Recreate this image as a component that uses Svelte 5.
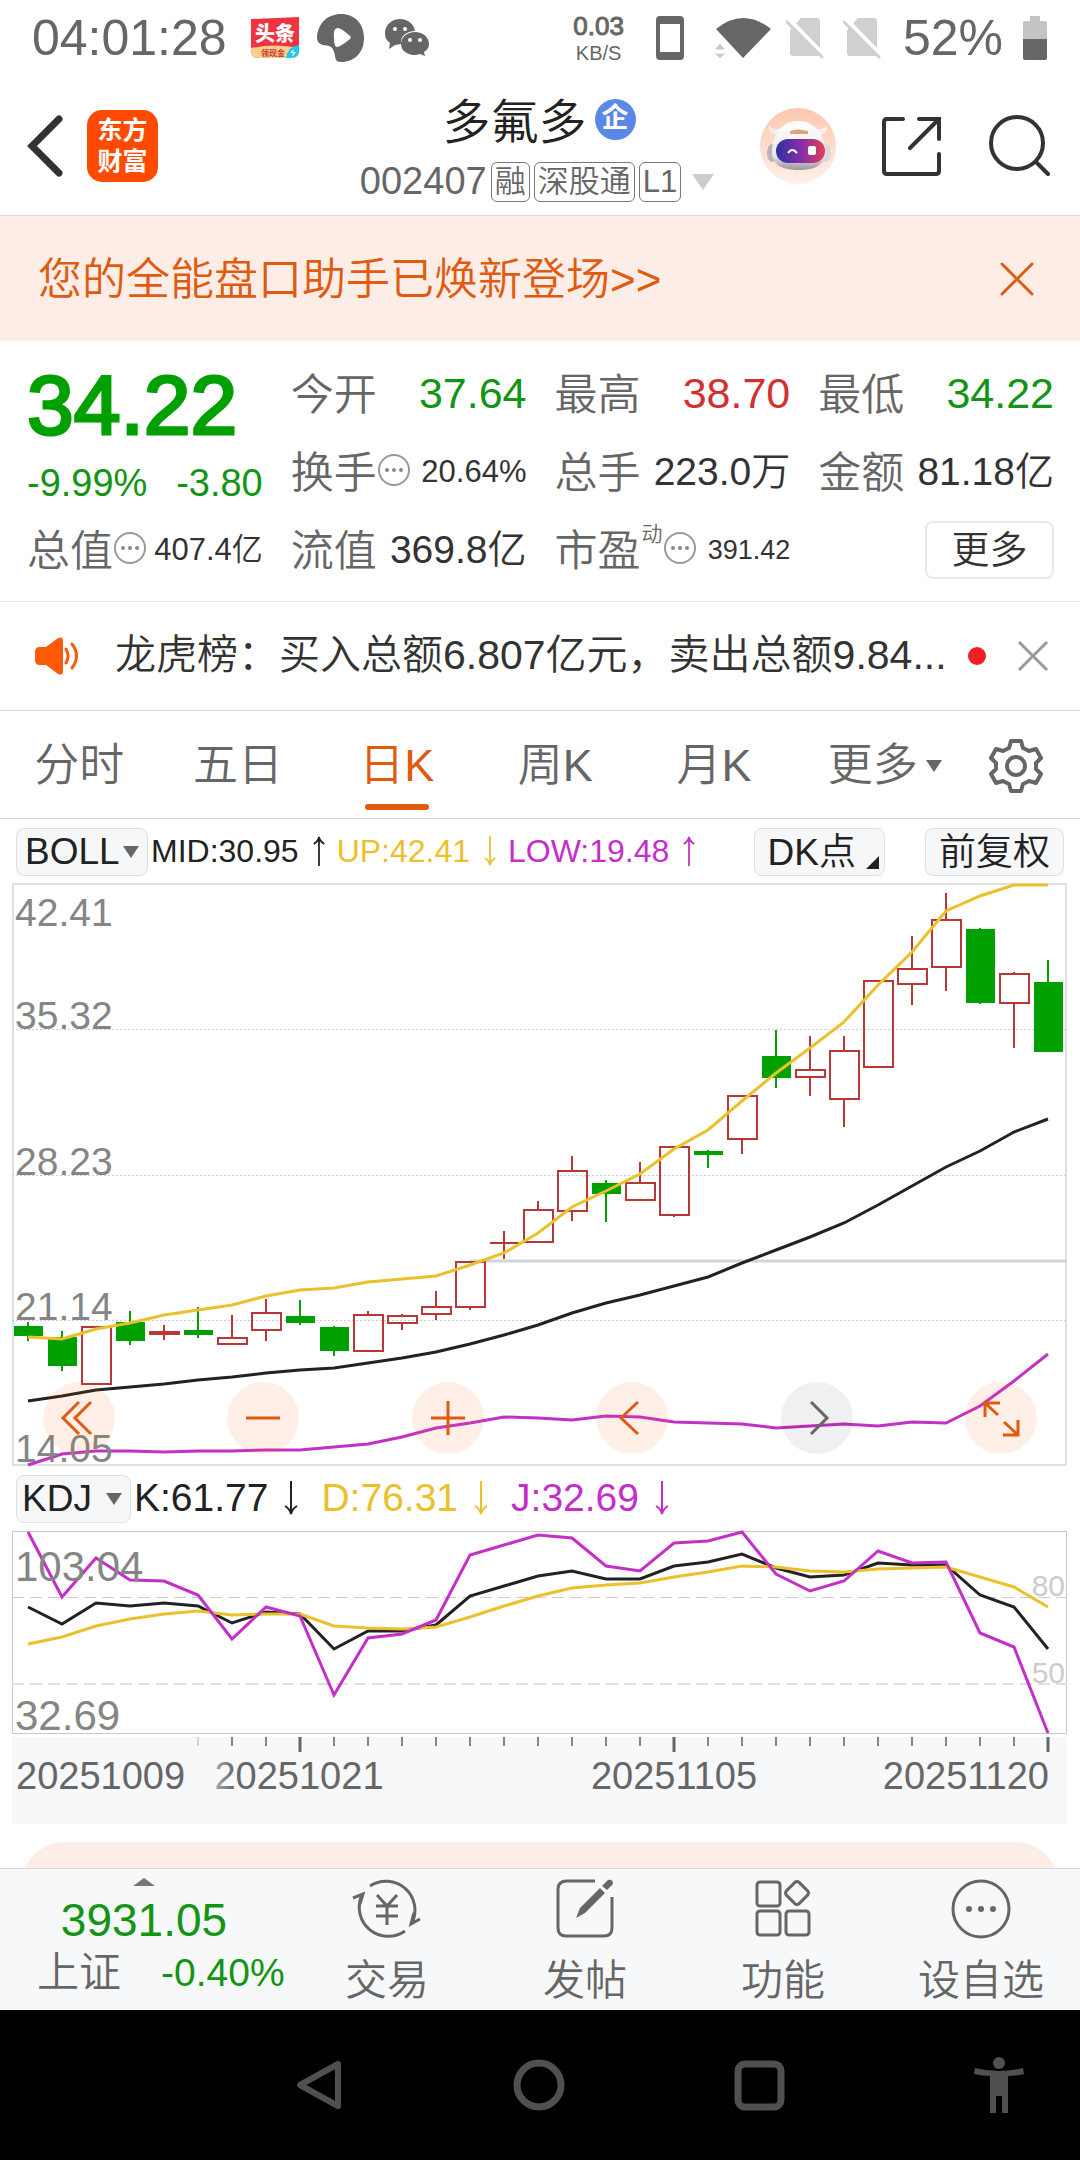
<script lang="ts">
    const tabs = ["分时", "五日", "日K", "周K", "月K"];
    let active = $state("日K");
    let main = $state("BOLL");
    let sub = $state("KDJ");

    // [up, high, top of body, bottom of body, low]
    const candles = [
        [0, 438, 442, 452, 457], [0, 447, 453, 482, 487], [1, 443, 443, 500, 500],
        [0, 427, 438, 457, 461], [1, 441, 448, 450, 456], [0, 423, 446, 451, 454],
        [1, 431, 454, 460, 460], [1, 415, 429, 446, 457], [0, 416, 432, 439, 441],
        [0, 442, 443, 467, 472], [1, 427, 431, 467, 467], [1, 430, 432, 439, 446],
        [1, 407, 423, 430, 436], [1, 378, 378, 423, 426], [1, 347, 359, 359, 375],
        [1, 317, 326, 358, 358], [1, 272, 287, 327, 337], [0, 296, 299, 310, 338],
        [1, 278, 299, 316, 316], [1, 263, 263, 331, 333], [0, 266, 267, 271, 284],
        [1, 212, 212, 255, 270], [0, 146, 172, 194, 204], [1, 152, 186, 193, 212],
        [1, 152, 167, 215, 243], [1, 97, 97, 183, 183], [1, 52, 85, 100, 121],
        [1, 9, 36, 83, 107], [0, 44, 45, 119, 120], [1, 88, 90, 119, 164],
        [0, 76, 98, 168, 168]
    ];
    const boll = {
        up: [453, 455, 445, 439, 431, 426, 421, 412, 406, 404, 398, 395, 392, 381, 369, 349, 323, 307, 290, 265, 246, 217, 189, 164, 138, 101, 68, 27, 12, 1, 1],
        mid: [517, 512, 506, 503, 500, 496, 493, 489, 486, 484, 479, 474, 468, 460, 451, 441, 429, 419, 411, 402, 393, 379, 366, 353, 339, 321, 302, 283, 267, 248, 235],
        low: [581, 570, 567, 567, 568, 567, 567, 566, 566, 563, 560, 553, 544, 539, 533, 534, 536, 532, 533, 538, 539, 540, 544, 542, 540, 542, 538, 539, 522, 497, 470]
    };
    const kdj = {
        k: [76, 93, 72, 75, 72, 75, 92, 81, 83, 118, 100, 100, 94, 65, 55, 45, 40, 48, 48, 35, 31, 23, 37, 46, 44, 32, 34, 34, 64, 76, 118],
        d: [113, 106, 95, 88, 83, 80, 84, 83, 83, 95, 97, 98, 96, 86, 75, 65, 57, 54, 52, 46, 41, 35, 36, 40, 41, 38, 37, 36, 46, 56, 76],
        j: [1, 66, 27, 49, 50, 64, 108, 76, 85, 164, 107, 103, 89, 24, 14, 4, 7, 35, 40, 12, 10, 1, 43, 60, 50, 20, 32, 31, 102, 116, 202]
    };
    const x = (i: number) => 16 + 34 * i;
    const line = (ys: number[]) => ys.map((y, i) => x(i) + "," + y).join(" ");
    const ticks = candles.map((_, i) => i).filter((i) => i > 4);
</script>

{#snippet arrow(down)}
    <svg class="arrow" viewBox="0 0 16 36">
        <path d={down ? "M8 1V33M2 26Q7 29 8 34Q9 29 14 26" : "M8 35V3M2 10Q7 7 8 2Q9 7 14 10"} />
    </svg>
{/snippet}

{#snippet info()}
    <svg class="info" viewBox="0 0 32 32">
        <circle cx="16" cy="16" r="15" fill="none" stroke="#999" stroke-width="2" />
        <g fill="#888"><circle cx="9" cy="16" r="2" /><circle cx="16" cy="16" r="2" /><circle cx="23" cy="16" r="2" /></g>
    </svg>
{/snippet}

{#snippet sim()}
    <svg width="38" height="42" viewBox="0 0 38 42">
        <path d="M4 13 15 1H31Q34 1 34 4V36Q34 39 31 39H7Q4 39 4 36Z" fill="#d0d0d0" />
        <path d="M3 2 38 38" stroke="#fff" stroke-width="4" />
        <path d="M1 5 36 40" stroke="#d0d0d0" stroke-width="3" stroke-linecap="round" />
    </svg>
{/snippet}

<div class="page">
    <div class="status">
        <span class="clock">04:01:28</span>
        <svg class="toutiao" width="48" height="42" viewBox="0 0 48 42">
            <path d="M0 2 48 0V33Q48 41 40 41H8Q0 41 0 33Z" fill="#ef3340" />
            <path d="M0 31Q24 26 48 31V33Q48 41 40 41H8Q0 41 0 33Z" fill="#fccf8b" />
            <path d="M35 41Q36 30 48 28V33Q48 41 40 41Z" fill="#20c8ee" />
            <path d="m43 32-4 4h3l-1 4 4-5h-3z" fill="#fff" />
            <text x="4" y="24" font-size="20" font-weight="900" fill="#fff">头条</text>
            <text x="10" y="39" font-size="8" font-weight="700" fill="#c33">领现金</text>
        </svg>
        <svg class="blob" width="48" height="48" viewBox="0 0 48 48">
            <path d="M24 0C38 0 47 10 47 24S38 48 24 48C17 48 19 43 17 38C15 31 11 32 6 31C2 30 0 28 0 23C1 9 11 0 24 0ZM20 14Q16 15 17 24Q17 33 20 33Q23 33 33 25Q35 23 32 21Q23 13 20 14Z" fill="#666" fill-rule="evenodd" />
        </svg>
        <svg class="wechat" width="44" height="38" viewBox="0 0 44 38">
            <path d="M15 0C23 0 29 5 30 12C22 12 15 17 16 25L10 26 4 30 5 24C1 21 0 18 0 14C0 6 7 0 15 0Z" fill="#666" />
            <path d="M30 13C38 13 44 18 44 25C44 29 42 31 39 33L40 37 35 35C25 38 16 33 16 25C16 18 22 13 30 13Z" fill="#666" />
            <g fill="#fff"><circle cx="10" cy="10" r="2" /><circle cx="20" cy="10" r="2" /><circle cx="25" cy="21" r="2" /><circle cx="35" cy="21" r="2" /></g>
        </svg>
        <div class="speed"><b>0.03</b><span>KB/S</span></div>
        <svg class="phone" width="28" height="44" viewBox="0 0 28 44">
            <path d="M4 0H24Q28 0 28 4V40Q28 44 24 44H4Q0 44 0 40V4Q0 0 4 0ZM4 8V36H24V8Z" fill="#666" fill-rule="evenodd" />
        </svg>
        <svg class="wifi" width="58" height="42" viewBox="0 0 58 42">
            <path d="M2 12Q29-10 57 12L29 41Z" fill="#666" />
            <path d="M0 33H12L6 26ZM0 36H12L6 42Z" fill="#ccc" stroke="#fff" />
        </svg>
        <span class="sim">{@render sim()}</span>
        <span class="sim">{@render sim()}</span>
        <span class="percent">52%</span>
        <svg width="24" height="44" viewBox="0 0 24 44">
            <path d="M7 0H17V5H22Q24 5 24 7V24H0V7Q0 5 2 5H7Z" fill="#c4c4c4" />
            <path d="M0 23H24V42Q24 44 22 44H2Q0 44 0 42Z" fill="#666" />
        </svg>
    </div>

    <header>
        <div class="left">
            <button aria-label="返回">
                <svg width="40" height="64" viewBox="0 0 40 64"><path d="M35 5 8 32 35 59" fill="none" stroke="#333" stroke-width="7" stroke-linecap="round" /></svg>
            </button>
            <button class="logo">东方<br />财富</button>
        </div>
        <div class="stock">
            <h1>多氟多<span class="badge">企</span></h1>
            <div class="code">
                <span class="num">002407</span>
                <span class="tag">融</span><span class="tag">深股通</span><span class="tag l1">L1</span>
                <svg width="22" height="16" viewBox="0 0 22 16"><path d="M0 0H22L11 16Z" fill="#ccc" /></svg>
            </div>
        </div>
        <div class="right">
            <button aria-label="助手">
                <svg width="76" height="76" viewBox="0 0 76 76">
                    <defs>
                        <linearGradient id="skin" x2="0" y2="1"><stop stop-color="#fcc7ae" /><stop offset="1" stop-color="#fff1ea" /></linearGradient>
                        <linearGradient id="visor"><stop stop-color="#2f2fa5" /><stop offset=".55" stop-color="#8c2fa5" /><stop offset="1" stop-color="#e04055" /></linearGradient>
                        <linearGradient id="shell" x2="0" y2="1"><stop stop-color="#fff" /><stop offset=".7" stop-color="#ece8ea" /><stop offset="1" stop-color="#9b959c" /></linearGradient>
                    </defs>
                    <circle cx="38" cy="38" r="38" fill="url(#skin)" />
                    <path d="M18 27Q7 26 9 17Q13 23 22 20ZM58 27Q69 26 67 17Q63 23 54 20Z" fill="#fbeee9" />
                    <ellipse cx="12" cy="45" rx="5" ry="9" fill="#b9b2b6" />
                    <ellipse cx="66" cy="45" rx="5" ry="9" fill="#ddd7da" />
                    <path d="M38 13C56 13 65 28 65 44C65 57 55 62 39 62C22 62 12 57 12 44C12 28 21 13 38 13Z" fill="url(#shell)" />
                    <path d="M30 23Q38 20 48 23V26H30Z" fill="#e0a276" />
                    <rect x="16" y="31" width="49" height="24" rx="12" fill="url(#visor)" />
                    <path d="M28 45Q32 39 37 45" fill="none" stroke="#fff" stroke-width="2" />
                    <rect x="48" y="38" width="8" height="9" rx="2" fill="#fff" />
                </svg>
            </button>
            <button aria-label="分享">
                <svg width="60" height="62" viewBox="0 0 60 62"><path d="M21 4H5Q2 4 2 7V56Q2 59 5 59H54Q57 59 57 56V39M57 24V4H37M56 5 28 33" fill="none" stroke="#333" stroke-width="4" stroke-linecap="round" /></svg>
            </button>
            <button aria-label="搜索">
                <svg width="62" height="62" viewBox="0 0 62 62"><circle cx="29" cy="28" r="26" fill="none" stroke="#333" stroke-width="4" /><path d="M48 47 60 59" stroke="#333" stroke-width="4" stroke-linecap="round" /></svg>
            </button>
        </div>
    </header>

    <div class="banner">
        <a href="#assistant">您的全能盘口助手已焕新登场&gt;&gt;</a>
        <button aria-label="关闭">
            <svg width="34" height="34" viewBox="0 0 34 34"><path d="M2 2 32 32M32 2 2 32" stroke="#e05a10" stroke-width="3" stroke-linecap="round" /></svg>
        </button>
    </div>

    <section class="quote">
        <div class="price">
            <strong>34.22</strong>
            <div><span>-9.99%</span><span>-3.80</span></div>
        </div>
        <div class="cell"><span>今开</span><b class="big green">37.64</b></div>
        <div class="cell"><span>最高</span><b class="big red">38.70</b></div>
        <div class="cell"><span>最低</span><b class="big green">34.22</b></div>
        <div class="cell"><span>换手{@render info()}</span><b class="small">20.64%</b></div>
        <div class="cell"><span>总手</span><b>223.0万</b></div>
        <div class="cell"><span>金额</span><b>81.18亿</b></div>
        <div class="cell"><span>总值{@render info()}</span><b class="small">407.4亿</b></div>
        <div class="cell"><span>流值</span><b>369.8亿</b></div>
        <div class="cell"><span>市盈<sup>动</sup>{@render info()}</span><b class="tiny">391.42</b></div>
        <div class="cell end"><button class="more">更多</button></div>
    </section>

    <div class="news">
        <svg width="46" height="38" viewBox="0 0 46 38">
            <path d="M5 10H11L23 1Q28-1 28 4V34Q28 39 23 37L11 28H5Q0 28 0 23V15Q0 10 5 10Z" fill="#ff5a0a" />
            <path d="M31 12Q35 19 31 26M37 7Q46 19 37 31" fill="none" stroke="#ff5a0a" stroke-width="3" stroke-linecap="round" />
        </svg>
        <a href="#news">龙虎榜：买入总额6.807亿元，卖出总额9.84...</a>
        <i class="dot"></i>
        <button aria-label="关闭">
            <svg width="32" height="32" viewBox="0 0 32 32"><path d="M2 2 30 30M30 2 2 30" stroke="#999" stroke-width="3" /></svg>
        </button>
    </div>

    <nav class="tabs">
        {#each tabs as tab}
            <button class:active={active === tab} onclick={() => (active = tab)}>{tab}</button>
        {/each}
        <button><span class="drop">更多<svg width="16" height="12" viewBox="0 0 16 12"><path d="M0 0H16L8 12Z" fill="#666" /></svg></span></button>
        <button class="gear" aria-label="设置">
            <svg width="54" height="56" viewBox="0 0 54 56" fill="none" stroke="#666" stroke-width="4">
                <path d="M22 3H32L34 10 40 13 47 11 52 20 47 25V31L52 36 47 45 40 43 34 46 32 53H22L20 46 14 43 7 45 2 36 7 31V25L2 20 7 11 14 13 20 10Z" stroke-linejoin="round" />
                <circle cx="27" cy="28" r="9" />
            </svg>
        </button>
    </nav>

    <div class="legend boll">
        <label class="pick">
            <select bind:value={main} aria-label="主图指标"><option>BOLL</option><option>MA</option></select>
            <svg width="16" height="12" viewBox="0 0 16 12"><path d="M0 0H16L8 12Z" fill="#666" /></svg>
        </label>
        <span class="black">MID:30.95{@render arrow(false)}</span>
        <span class="yellow">UP:42.41{@render arrow(true)}</span>
        <span class="purple">LOW:19.48{@render arrow(false)}</span>
        <button class="chip dk">DK点<svg width="13" height="13" viewBox="0 0 14 14"><path d="M14 0V14H0Z" fill="#222" /></svg></button>
        <button class="chip">前复权</button>
    </div>

    <div class="chart">
        <svg viewBox="0 0 1055 582">
            <rect x="1" y="0" width="1053" height="581" fill="none" stroke="#e0e0e0" stroke-width="2" />
            {#each [145, 291, 436] as y}
                <path d="M0 {y}.5H1055" stroke="#ccc" stroke-dasharray="2 2" />
            {/each}
            <path d="M458 377H1055" stroke="#d0d3d7" stroke-width="3" />
            {#each candles as [up, high, top, bottom, low], i}
                {@const body = `M${x(i) - 14} ${top}h29V${bottom}h-29Z`}
                {#if up}
                    <path d="M{x(i)} {high}V{top}M{x(i)} {bottom}V{low}{body}" fill="none" stroke="#b83838" stroke-width="2" />
                {:else}
                    <path d="M{x(i)} {high}V{low}" stroke="#00a000" stroke-width="2" />
                    <path d={body} fill="#00a000" />
                {/if}
            {/each}
            <polyline points={line(boll.mid)} stroke="#222" />
            <polyline points={line(boll.up)} stroke="#ebc02d" />
            <polyline points={line(boll.low)} stroke="#c42fc8" />
            <g font-size="39" fill="#858585">
                <text x="3" y="42">42.41</text>
                <text x="3" y="145">35.32</text>
                <text x="3" y="291">28.23</text>
                <text x="3" y="436">21.14</text>
                <text x="3" y="578">14.05</text>
            </g>
        </svg>
        <div class="tools">
            <button aria-label="最早"><svg viewBox="0 0 72 72"><path d="M36 20 20 36 36 52M48 20 32 36 48 52" /></svg></button>
            <button aria-label="缩小"><svg viewBox="0 0 72 72"><path d="M19 36H53" /></svg></button>
            <button aria-label="放大"><svg viewBox="0 0 72 72"><path d="M19 36H53M36 19V53" /></svg></button>
            <button aria-label="向左"><svg viewBox="0 0 72 72"><path d="M42 20 25 36 42 52" /></svg></button>
            <button class="off" aria-label="向右"><svg viewBox="0 0 72 72"><path d="M30 20 46 36 30 52" /></svg></button>
            <button aria-label="全屏"><svg viewBox="0 0 72 72"><path d="M20 35V21H35M20 21 33 33M39 40 52 52M53 38V53H38" /></svg></button>
        </div>
    </div>

    <div class="legend kdj">
        <label class="pick">
            <select bind:value={sub} aria-label="副图指标"><option>KDJ</option><option>MACD</option></select>
            <svg width="16" height="12" viewBox="0 0 16 12"><path d="M0 0H16L8 12Z" fill="#666" /></svg>
        </label>
        <span class="black">K:61.77{@render arrow(true)}</span>
        <span class="yellow">D:76.31{@render arrow(true)}</span>
        <span class="purple">J:32.69{@render arrow(true)}</span>
    </div>

    <div class="chart">
        <svg viewBox="0 0 1055 203">
            <rect x=".5" y=".5" width="1054" height="202" fill="none" stroke="#c8c8c8" />
            <path d="M0 66.5H1055" stroke="#ccc" stroke-dasharray="12 6" />
            <path d="M0 153H1055" stroke="#e0e0e0" stroke-width="2" stroke-dasharray="12 6" />
            <g font-size="30" fill="#ccc" text-anchor="end">
                <text x="1053" y="65">80</text>
                <text x="1053" y="152">50</text>
            </g>
            <polyline points={line(kdj.k)} stroke="#222" />
            <polyline points={line(kdj.d)} stroke="#ebc02d" />
            <polyline points={line(kdj.j)} stroke="#c42fc8" />
            <g font-size="42" fill="#858585">
                <text x="3" y="50">103.04</text>
                <text x="3" y="199">32.69</text>
            </g>
        </svg>
    </div>
    <div class="chart axis">
        <svg viewBox="0 0 1055 87">
            {#each ticks as i}
                {@const major = i % 11 === 8}
                <path d="M{x(i)} 0V{major ? 15 : 9}" stroke={i === 5 ? "#d5d5d5" : major ? "#666" : "#888"} stroke-width={major ? 3 : 2} />
            {/each}
            <defs><linearGradient id="fade"><stop stop-color="#aaa" /><stop offset=".12" stop-color="#666" /></linearGradient></defs>
            <g font-size="38" fill="#666">
                <text x="4" y="52">20251009</text>
                <text x="287" y="52" text-anchor="middle" fill="url(#fade)">20251021</text>
                <text x="662" y="52" text-anchor="middle">20251105</text>
                <text x="1037" y="52" text-anchor="end">20251120</text>
            </g>
        </svg>
    </div>

    <div class="peek"><div></div></div>

    <footer>
        <a class="index" href="#index">
            <svg width="22" height="8" viewBox="0 0 22 8"><path d="M0 8 11 0 22 8Z" fill="#777" /></svg>
            <strong>3931.05</strong>
            <span class="row"><span>上证</span><em>-0.40%</em></span>
        </a>
        <button>
            <svg width="70" height="64" viewBox="0 0 70 64">
                <path d="M18 9A29 29 0 0 1 60 46M10 18A29 29 0 0 0 53 54M1 21 11 17 8 27M68 42 59 47 62 36" />
                <path d="M25 18 35 29 45 18M35 29V48M24 29H46M24 39H46" />
            </svg>
            交易
        </button>
        <button>
            <svg width="62" height="64" viewBox="0 0 62 64">
                <path d="M41 4H13Q4 4 4 12V51Q4 59 12 59H50Q58 59 58 51V20" />
                <path d="M22 41 26 31 46 11 51 16 31 36ZM48 9 54 3Q59 2 59 7L53 13Z" fill="#666" stroke="none" />
            </svg>
            发帖
        </button>
        <button>
            <svg width="62" height="64" viewBox="0 0 62 64">
                <rect x="5" y="5" width="23" height="24" rx="3" />
                <rect x="5" y="34" width="23" height="24" rx="3" />
                <rect x="34" y="34" width="23" height="24" rx="3" />
                <rect x="36" y="7" width="18" height="18" rx="3" transform="rotate(45 45 16)" />
            </svg>
            功能
        </button>
        <button>
            <svg width="64" height="64" viewBox="0 0 64 64">
                <circle cx="32" cy="32" r="28" />
                <g fill="#666" stroke="none"><circle cx="20" cy="32" r="3" /><circle cx="32" cy="32" r="3" /><circle cx="44" cy="32" r="3" /></g>
            </svg>
            设自选
        </button>
    </footer>

    <div class="system">
        <button aria-label="后退"><svg width="50" height="56" viewBox="0 0 50 56"><path d="M44 7V49L6 28Z" fill="none" stroke="#505050" stroke-width="6" stroke-linejoin="round" /></svg></button>
        <button aria-label="主页"><svg width="52" height="52" viewBox="0 0 52 52"><circle cx="26" cy="26" r="22" fill="none" stroke="#505050" stroke-width="7" /></svg></button>
        <button aria-label="最近"><svg width="52" height="52" viewBox="0 0 52 52"><rect x="5" y="5" width="43" height="43" rx="7" fill="none" stroke="#505050" stroke-width="7" /></svg></button>
        <button aria-label="无障碍">
            <svg width="50" height="56" viewBox="0 0 50 56"><circle cx="25" cy="6" r="6" fill="#505050" /><path d="M1 11Q25 17 49 11L50 17Q42 19 34 19V56H28V39H22V56H16V19Q8 19 0 17Z" fill="#505050" /></svg>
        </button>
    </div>
</div>

<style>
    :global(body) {
        margin: 0;
        background: white;
    }
    .page {
        font-family: "Liberation Sans", "Noto Sans CJK SC", sans-serif;
        font-weight: 350;
        line-height: 1.2;
        color: #333;
        overflow: hidden;
    }
    svg {
        display: block;
        flex: none;
    }
    button {
        font: inherit;
        color: inherit;
        background: none;
        border: 0;
        padding: 0;
    }
    a {
        color: inherit;
        text-decoration: none;
    }
    .status {
        display: flex;
        align-items: center;
        height: 76px;
        padding: 0 33px 0 32px;
        color: #666;
    }
    .clock,
    .percent {
        font-size: 50px;
    }
    .toutiao {
        margin-left: 24px;
    }
    .blob {
        margin-left: 18px;
    }
    .wechat {
        margin-left: 20px;
    }
    .speed {
        display: flex;
        flex-direction: column;
        align-items: center;
        margin-left: auto;
        font-size: 20px;
        line-height: 24px;
    }
    .speed b {
        font-size: 26px;
        line-height: 30px;
        font-weight: 400;
        -webkit-text-stroke: 1px #666;
    }
    .phone {
        margin-left: 32px;
    }
    .wifi {
        margin: 0 14px 0 30px;
    }
    .sim {
        margin-right: 19px;
    }
    .percent {
        margin: 0 20px 0 3px;
    }
    header {
        display: grid;
        grid-template-columns: 1fr auto 1fr;
        align-items: center;
        height: 139px;
        padding: 0 30px 0 24px;
        border-bottom: 1px solid #d8d8d8;
    }
    .left,
    .right {
        display: flex;
        align-items: center;
        gap: 23px;
    }
    .right {
        justify-content: flex-end;
        gap: 46px;
    }
    .logo {
        width: 71px;
        height: 72px;
        border-radius: 15px;
        background: #ff4a00;
        color: white;
        font-size: 25px;
        line-height: 31px;
        font-weight: 700;
    }
    .stock {
        display: flex;
        flex-direction: column;
        align-items: center;
        gap: 8px;
    }
    h1 {
        display: flex;
        align-items: center;
        gap: 8px;
        margin: 0;
        padding: 8px 0 0 4px;
        font-size: 48px;
        line-height: 56px;
        font-weight: 350;
        color: #222;
    }
    .badge {
        width: 41px;
        height: 41px;
        margin-bottom: 6px;
        line-height: 39px;
        border-radius: 50%;
        background: #5b87e8;
        color: white;
        font-size: 27px;
        font-weight: 700;
        text-align: center;
    }
    .code {
        display: flex;
        align-items: center;
        gap: 4px;
        color: #666;
    }
    .num {
        font-size: 38px;
    }
    .tag {
        padding: 0 3px;
        border: 1px solid #777;
        border-radius: 6px;
        font-size: 31px;
        line-height: 38px;
    }
    .l1 {
        margin-right: 7px;
    }
    .banner {
        display: flex;
        align-items: center;
        justify-content: space-between;
        height: 125px;
        padding: 0 46px 0 38px;
        background: #fceee6;
        color: #e05a10;
        font-size: 44px;
    }
    .banner a {
        padding-top: 4px;
    }
    .quote {
        display: grid;
        grid-template-columns: repeat(4, 1fr);
        grid-auto-rows: 78px;
        column-gap: 28px;
        padding: 14px 26px 12px 27px;
        border-bottom: 1px solid #ebebeb;
    }
    .price {
        grid-row: span 2;
        display: flex;
        flex-direction: column;
        gap: 12px;
        padding-top: 8px;
        color: #00a000;
    }
    .price strong {
        font-size: 84px;
        line-height: 84px;
        font-weight: 400;
        -webkit-text-stroke: 3px #00a000;
    }
    .price div {
        display: flex;
        justify-content: space-between;
        font-size: 38px;
        line-height: 48px;
        color: #149414;
    }
    .cell {
        display: flex;
        align-items: center;
        justify-content: space-between;
        white-space: nowrap;
    }
    .cell span {
        display: flex;
        align-items: center;
        padding-top: 3px;
        font-size: 43px;
        color: #666;
    }
    .cell b {
        font-weight: 350;
        font-size: 39px;
    }
    .cell .big {
        font-size: 43px;
    }
    .cell .small {
        font-size: 31px;
    }
    .cell .tiny {
        font-size: 27px;
    }
    .green {
        color: #149414;
    }
    .red {
        color: #d43030;
    }
    .info {
        width: 32px;
        height: 32px;
        margin: 0 0 7px 1px;
    }
    sup {
        align-self: flex-start;
        margin-left: 1px;
        font-size: 21px;
        line-height: 16px;
    }
    .cell.end {
        justify-content: flex-end;
    }
    .more {
        width: 129px;
        height: 58px;
        border: 2px solid #e8e8e8;
        border-radius: 8px;
        font-size: 38px;
        line-height: 52px;
    }
    .news {
        display: flex;
        align-items: center;
        height: 108px;
        padding: 0 31px 0 35px;
        border-bottom: 1px solid #d8d8d8;
        font-size: 41px;
    }
    .news a {
        flex: 1;
        margin-left: 34px;
        white-space: nowrap;
    }
    .dot {
        width: 18px;
        height: 18px;
        margin-right: 31px;
        border-radius: 50%;
        background: #f22020;
    }
    .tabs {
        display: flex;
        height: 107px;
        border-bottom: 1px solid #d8d8d8;
        font-size: 45px;
        color: #666;
    }
    .tabs button {
        position: relative;
        flex: 1;
        padding-top: 2px;
    }
    .tabs .gear {
        flex: 0 0 128px;
        display: flex;
        align-items: center;
        justify-content: center;
    }
    .tabs .active {
        color: #e05a10;
    }
    .active::after {
        content: "";
        position: absolute;
        left: 50%;
        bottom: 8px;
        width: 64px;
        height: 6px;
        margin-left: -32px;
        border-radius: 3px;
        background: #e05a10;
    }
    .drop {
        position: relative;
    }
    .drop svg {
        position: absolute;
        right: -24px;
        top: 20px;
    }
    .legend {
        display: flex;
        align-items: center;
        height: 65px;
        padding: 0 16px;
        font-size: 32px;
    }
    .legend span {
        display: flex;
        align-items: center;
        gap: 13px;
        margin-right: 11px;
    }
    .legend.kdj {
        font-size: 39px;
    }
    .kdj span {
        gap: 15px;
        margin-right: 22px;
    }
    .arrow {
        width: 14px;
        height: 32px;
        fill: none;
        stroke: currentColor;
        stroke-width: 2;
    }
    .kdj .arrow {
        width: 16px;
        height: 36px;
    }
    .black {
        color: #222;
    }
    .yellow {
        color: #ebc02d;
    }
    .purple {
        color: #c42fc8;
    }
    .pick {
        position: relative;
        margin-right: 3px;
    }
    .pick svg {
        position: absolute;
        right: 9px;
        top: 18px;
        pointer-events: none;
    }
    select,
    .chip {
        height: 48px;
        border: 1px solid #dcdfe3;
        border-radius: 8px;
        background: #f6f7f9;
        color: #222;
        font: inherit;
        font-size: 37px;
        line-height: 48px;
    }
    select {
        appearance: none;
        display: block;
        width: 132px;
        padding: 0 0 0 8px;
        line-height: 44px;
    }
    .kdj select {
        width: 115px;
        padding-left: 5px;
    }
    .chip {
        display: flex;
        padding: 0 13px;
    }
    .dk {
        gap: 10px;
        padding: 0 5px 0 13px;
        margin: 0 40px 0 auto;
    }
    .dk svg {
        margin-top: 27px;
    }
    .chart {
        position: relative;
        margin: 0 13px 0 12px;
    }
    .chart > svg {
        width: 100%;
        overflow: visible;
    }
    polyline {
        fill: none;
        stroke-width: 3;
    }
    .tools {
        position: absolute;
        left: 31px;
        right: 30px;
        bottom: 12px;
        display: flex;
        justify-content: space-between;
    }
    .tools button {
        width: 72px;
        height: 72px;
        border-radius: 50%;
        background: rgba(255, 96, 20, 0.1);
    }
    .tools .off {
        background: rgba(0, 0, 0, 0.06);
    }
    .tools path {
        fill: none;
        stroke: #e05a10;
        stroke-width: 3;
    }
    .tools .off path {
        stroke: #666;
    }
    .axis {
        margin-top: 3px;
        background: #f7f8fa;
    }
    .peek {
        height: 26px;
        margin: 18px 20px 0;
        overflow: hidden;
    }
    .peek div {
        height: 90px;
        border-radius: 45px;
        background: #fceee6;
    }
    footer {
        display: flex;
        height: 141px;
        border-top: 1px solid #d8d8d8;
        background: #f7f8fa;
        color: #666;
    }
    footer button {
        flex: 198;
        display: flex;
        flex-direction: column;
        align-items: center;
        padding-top: 8px;
        font-size: 42px;
        line-height: 80px;
    }
    footer button svg {
        fill: none;
        stroke: #666;
        stroke-width: 3;
        overflow: visible;
    }
    .index {
        flex: 288;
        display: flex;
        flex-direction: column;
        align-items: center;
        padding-top: 9px;
    }
    .index strong {
        margin-top: 8px;
        font-size: 46px;
        line-height: 52px;
        font-weight: 350;
        color: #149414;
    }
    .row {
        display: flex;
        gap: 40px;
        padding-left: 37px;
        align-self: flex-start;
        font-size: 42px;
        line-height: 54px;
    }
    .row em {
        font-style: normal;
        font-size: 39px;
        color: #149414;
    }
    .system {
        display: flex;
        height: 150px;
        padding-left: 209px;
        background: black;
    }
    .system button {
        flex: 0 0 220px;
        display: flex;
        align-items: center;
        justify-content: center;
    }
    .system button:last-child {
        flex-basis: 162px;
        margin-left: auto;
    }
</style>
